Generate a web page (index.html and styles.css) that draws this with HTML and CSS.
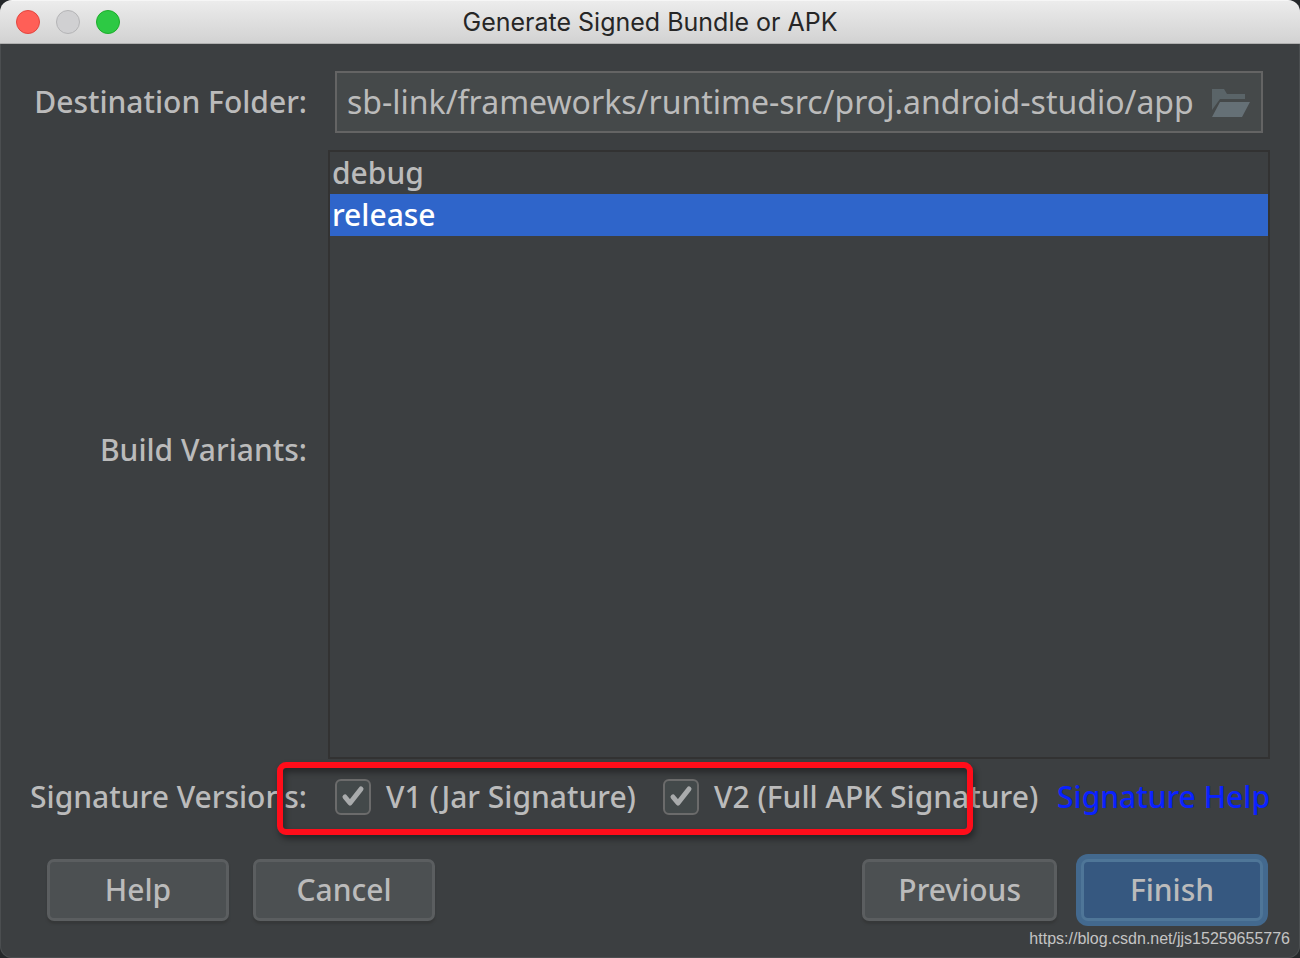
FILE: index.html
```html
<!DOCTYPE html>
<html lang="en">
<head>
    <meta charset="UTF-8">
    <meta name="viewport" content="width=device-width, initial-scale=1.0">
    <title>Generate Signed Bundle or APK</title>
    <link rel="stylesheet" href="styles.css">
</head>
<body>
    <div class="window">
        <header class="titlebar">
            <div class="lights">
                <span class="light red"></span>
                <span class="light grey"></span>
                <span class="light green"></span>
            </div>
            <h1>Generate Signed Bundle or APK</h1>
        </header>

        <form class="form">
            <label class="name" for="folder">Destination Folder:</label>
            <div class="folder-field">
                <input type="text" id="folder" value="sb-link/frameworks/runtime-src/proj.android-studio/app">
                <button type="button" class="browse" aria-label="Browse">
                    <svg width="38" height="30" viewBox="0 0 38 30">
                        <path d="M0 2H12L15 7H33V12H8L0 23Z" fill="#5a6468"/>
                        <path d="M8 15H38L30 30H0Z" fill="#657076"/>
                    </svg>
                </button>
            </div>

            <label class="name variants-name" for="variants">Build Variants:</label>
            <select id="variants" class="variants" size="2">
                <option>debug</option>
                <option selected>release</option>
            </select>

            <span class="name">Signature Versions:</span>
            <div class="versions">
                <label class="check">
                    <span class="box">
                        <input type="checkbox" checked>
                        <svg width="36" height="36" viewBox="0 0 36 36"><path d="M10 18L15 24L26 10" /></svg>
                    </span>
                    V1 (Jar Signature)
                </label>
                <label class="check">
                    <span class="box">
                        <input type="checkbox" checked>
                        <svg width="36" height="36" viewBox="0 0 36 36"><path d="M10 18L15 24L26 10" /></svg>
                    </span>
                    V2 (Full APK Signature)
                </label>
                <a href="#">Signature Help</a>
                <div class="marker"></div>
            </div>
        </form>

        <footer class="buttons">
            <button type="button">Help</button>
            <button type="button">Cancel</button>
            <button type="button" class="previous">Previous</button>
            <button type="button" class="finish">Finish</button>
        </footer>
        <div class="watermark">https://blog.csdn.net/jjs15259655776</div>
    </div>
</body>
</html>
```
FILE: styles.css
```css
* {
    box-sizing: border-box;
}
body {
    margin: 0;
    background-color: #25282a;
    font-family: "Noto Sans", sans-serif;
    font-size: 30px;
    font-weight: 500;
    line-height: 42px;
    color: #bbbbbb;
}
input, select, button {
    font: inherit;
    color: inherit;
    margin: 0;
}
.window {
    position: relative;
    display: flex;
    flex-direction: column;
    min-height: 100vh;
    background-color: #3c3f41;
    border-radius: 12px;
    overflow: hidden;
    box-shadow: inset 0 0 0 1px #4b4e50;
}

/* Title bar */
.titlebar {
    display: grid;
    grid-template-columns: 1fr auto 1fr;
    align-items: center;
    height: 44px;
    padding: 0 16px;
    background: linear-gradient(#ececec, #d2d2d2);
    border-top: 1px solid #f6f6f6;
    border-bottom: 1px solid #b0b0b0;
}
.titlebar h1 {
    margin: 0;
    font-family: Inter, sans-serif;
    font-size: 25px;
    font-weight: 400;
    color: #262626;
}
.lights {
    display: flex;
    gap: 16px;
}
.light {
    width: 24px;
    height: 24px;
    border: 1px solid;
    border-radius: 50%;
}
.red {
    background-color: #ff5f57;
    border-color: #e2463f;
}
.grey {
    background-color: #d0d0d2;
    border-color: #b4b4b6;
}
.green {
    background-color: #2dc944;
    border-color: #1dad2b;
}

/* Form */
.form {
    flex: 1;
    display: grid;
    grid-template-columns: 277px 1fr;
    grid-template-rows: auto 1fr auto;
    column-gap: 21px;
    row-gap: 17px;
    align-items: center;
    padding: 27px 30px 0;
}
.name {
    text-align: right;
    white-space: nowrap;
}
.variants-name {
    padding-bottom: 10px;
}
.folder-field {
    display: flex;
    align-items: center;
    height: 62px;
    margin: 0 7px;
    padding: 0 11px 0 10px;
    background-color: #45494a;
    border: 2px solid #646464;
}
.folder-field input {
    flex: 1;
    min-width: 0;
    padding: 0;
    font-size: 32px;
    font-weight: 400;
    background: none;
    border: none;
    outline: none;
}
.browse {
    display: flex;
    padding: 0;
    background: none;
    border: none;
}
.variants {
    align-self: stretch;
    width: 100%;
    height: 100%;
    padding: 0;
    background-color: #3c3f41;
    border: 2px solid #323232;
    border-radius: 0;
    outline: none;
    overflow: hidden;
}
.variants option {
    min-height: 42px;
    padding: 0 2px;
    font-weight: 500;
}
.variants option:checked {
    background: linear-gradient(#2f65ca, #2f65ca);
    -webkit-text-fill-color: #ffffff;
}
.versions {
    position: relative;
    display: flex;
    align-items: center;
    height: 42px;
    padding-left: 7px;
    white-space: nowrap;
}
.check {
    display: flex;
    align-items: center;
    gap: 15px;
    margin-right: 27px;
}
.check + .check {
    margin-right: 0;
}
.box {
    display: grid;
}
.box input, .box svg {
    grid-area: 1 / 1;
}
.box input {
    appearance: none;
    width: 36px;
    height: 36px;
    background-color: #43494a;
    border: 2px solid #6b6b6b;
    border-radius: 6px;
}
.box svg {
    fill: none;
    stroke: #a9abac;
    stroke-width: 5px;
    stroke-linecap: round;
    stroke-linejoin: round;
    pointer-events: none;
}
.box input:not(:checked) + svg {
    visibility: hidden;
}
.versions a {
    margin-left: auto;
    color: #0a22ff;
    text-decoration: none;
}
/* Red frame drawn over the check boxes */
.marker {
    position: absolute;
    top: -14px;
    left: -51px;
    width: 696px;
    height: 73px;
    border: 6px solid #ff0d1a;
    border-radius: 9px;
    box-shadow: 2px 4px 6px rgba(0, 0, 0, 0.4), inset 2px 4px 6px rgba(0, 0, 0, 0.4);
    pointer-events: none;
}

/* Buttons */
.buttons {
    display: flex;
    gap: 24px;
    padding: 41px 37px 37px 47px;
}
.buttons button {
    min-width: 182px;
    height: 62px;
    padding: 0 33px;
    background-color: #4c5052;
    border: 3px solid #5b5e60;
    border-radius: 7px;
    box-shadow: 0 3px 2px #363839;
}
.buttons .previous {
    margin-left: auto;
}
.buttons .finish {
    background-color: #365880;
    border-color: #4f7698;
    box-shadow: 0 0 0 5px #43698e;
}
.watermark {
    position: absolute;
    right: 10px;
    bottom: 8px;
    font-family: "Liberation Sans", sans-serif;
    font-size: 16px;
    font-weight: 400;
    line-height: 22px;
    color: #c4c4c4;
}
```
